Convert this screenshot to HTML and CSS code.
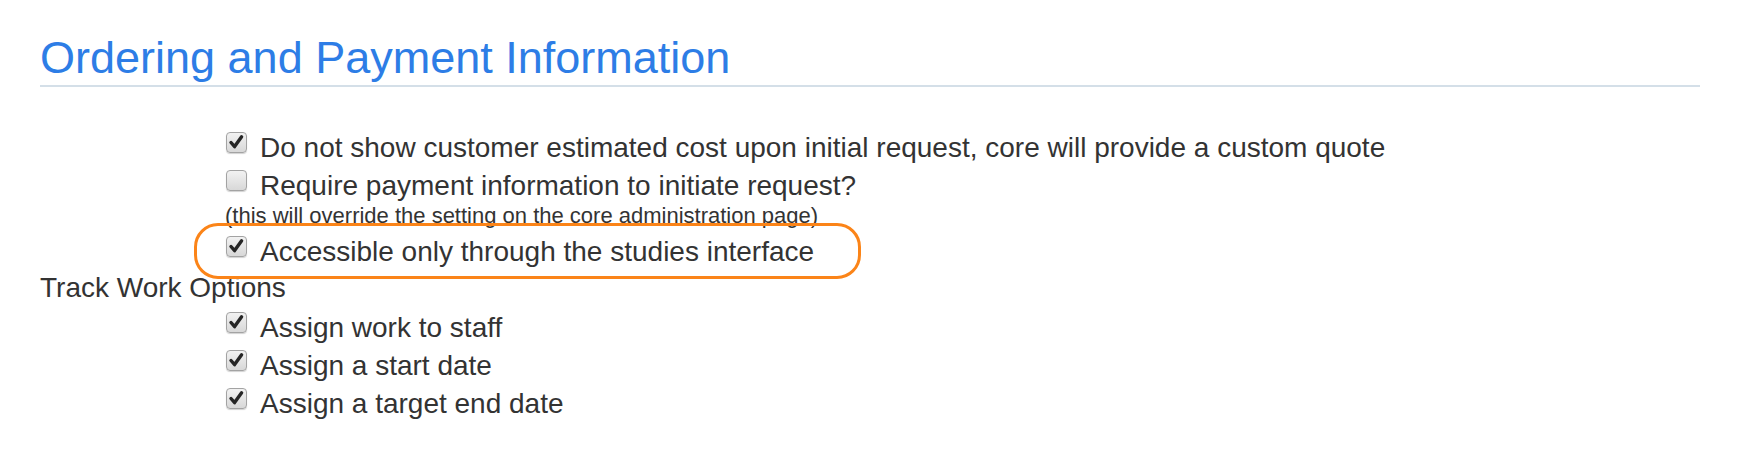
FILE: index.html
```html
<!DOCTYPE html>
<html>
<head>
<meta charset="utf-8">
<link rel="stylesheet" href="styles.css">
</head>
<body>
<div class="page">
  <h2 class="title">Ordering and Payment Information</h2>
  <div class="opts">
    <div class="row">
      <span class="cb"><svg viewBox="0 0 21 21" width="21" height="21"><path d="M5 10.5 L8.6 14.6 L15.6 4.8" /></svg></span>
      <span class="lbl">Do not show customer estimated cost upon initial request, core will provide a custom quote</span>
    </div>
    <div class="row">
      <span class="cb"></span>
      <span class="lbl">Require payment information to initiate request?</span>
    </div>
    <div class="note">(this will override the setting on the core administration page)</div>
    <div class="row hl">
      <span class="cb"><svg viewBox="0 0 21 21" width="21" height="21"><path d="M5 10.5 L8.6 14.6 L15.6 4.8" /></svg></span>
      <span class="lbl">Accessible only through the studies interface</span>
      <span class="ring"></span>
    </div>
  </div>
  <div class="track">Track Work Options</div>
  <div class="opts opts-track">
    <div class="row">
      <span class="cb"><svg viewBox="0 0 21 21" width="21" height="21"><path d="M5 10.5 L8.6 14.6 L15.6 4.8" /></svg></span>
      <span class="lbl">Assign work to staff</span>
    </div>
    <div class="row">
      <span class="cb"><svg viewBox="0 0 21 21" width="21" height="21"><path d="M5 10.5 L8.6 14.6 L15.6 4.8" /></svg></span>
      <span class="lbl">Assign a start date</span>
    </div>
    <div class="row">
      <span class="cb"><svg viewBox="0 0 21 21" width="21" height="21"><path d="M5 10.5 L8.6 14.6 L15.6 4.8" /></svg></span>
      <span class="lbl">Assign a target end date</span>
    </div>
  </div>
</div>
</body>
</html>
```
FILE: styles.css
```css
html, body {
  margin: 0;
  padding: 0;
  background: #ffffff;
}
body {
  font-family: "Liberation Sans", Arial, Helvetica, sans-serif;
  color: #333333;
}
.page {
  padding: 33px 57px 0 40px;
}
.title {
  margin: 0;
  font-size: 45px;
  font-weight: normal;
  line-height: 50px;
  color: #2d7de6;
  padding-bottom: 2px;
  border-bottom: 2px solid #d4dfe8;
}
.opts {
  padding-left: 183px;
  margin-top: 42px;
}
.row {
  position: relative;
  display: flex;
  align-items: flex-start;
  font-size: 28px;
  line-height: 38px;
}
.cb {
  flex: none;
  box-sizing: border-box;
  width: 21px;
  height: 21px;
  margin: 3px 13px 0 3px;
  border: 1px solid #a3a3a3;
  border-radius: 4px;
  background: linear-gradient(#f2f2f2, #d8d8d8);
  box-shadow: 0 1px 1px rgba(0, 0, 0, 0.18);
  position: relative;
}
.cb svg {
  position: absolute;
  left: -1px;
  top: -1px;
}
.cb path {
  fill: none;
  stroke: #262626;
  stroke-width: 3.4;
  stroke-linecap: round;
  stroke-linejoin: round;
}
.note {
  font-size: 22px;
  line-height: 22px;
  margin-top: 0;
  margin-left: 2px;
}
.hl {
  margin-top: 6px;
}
.ring {
  position: absolute;
  left: -29px;
  top: -10px;
  width: 667px;
  height: 56px;
  box-sizing: border-box;
  border: 3px solid #fb8418;
  border-radius: 24px;
}
.track {
  font-size: 28px;
  line-height: 38px;
  margin-top: -2px;
}
.opts-track {
  margin-top: 2px;
}
```
